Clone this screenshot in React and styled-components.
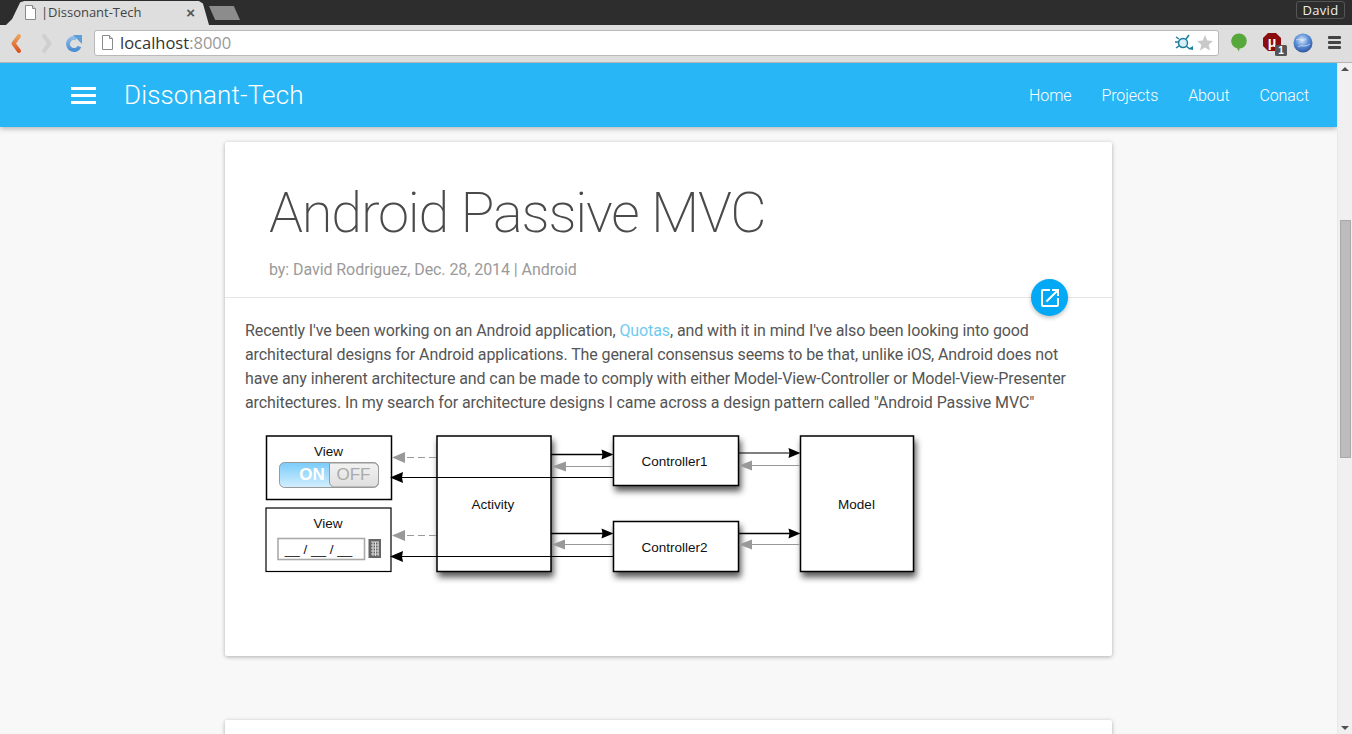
import React from "react"
import styled, { createGlobalStyle } from "styled-components"

const GlobalStyle = createGlobalStyle`
    html, body {
        margin: 0;
        height: 100%;
        overflow: hidden;
    }
    #root {
        height: 100%;
    }
    * {
        box-sizing: border-box;
    }
`

const navLinks = ["Home", "Projects", "About", "Conact"]

const PageIcon = () => (
    <svg width="13" height="15" viewBox="0 0 13 15">
        <path d="M1.5 .5H8.5L11.5 3.5V14.5H1.5Z" fill="#fff" stroke="#8a8a8a" />
        <path d="M8.5 .5V3.5H11.5" fill="#e0e0e0" stroke="#8a8a8a" />
    </svg>
)

const Diagram = () => (
    <svg width="680" height="165" viewBox="255 425 680 165">
        <defs>
            <filter id="shade" x="-15%" y="-15%" width="130%" height="135%">
                <feDropShadow dx="2" dy="5" stdDeviation="3" floodColor="#000" floodOpacity="0.65" />
            </filter>
            <linearGradient id="onFill" x1="0" y1="0" x2="0" y2="1">
                <stop offset="0" stopColor="#7accfb" />
                <stop offset="1" stopColor="#d3effd" />
            </linearGradient>
            <linearGradient id="offFill" x1="0" y1="0" x2="0" y2="1">
                <stop offset="0" stopColor="#f2f2f2" />
                <stop offset="1" stopColor="#dfdfdf" />
            </linearGradient>
        </defs>

        <rect x="266.5" y="436" width="125" height="63.5" fill="#fff" stroke="#000" strokeWidth="1.5" />
        <rect x="266" y="508" width="125" height="63.5" fill="#fff" stroke="#000" strokeWidth="1.2" />

        <g fill="#fff" stroke="#000" strokeWidth="1.5" filter="url(#shade)">
            <rect x="437" y="436" width="114" height="135.5" />
            <rect x="613.5" y="436" width="125" height="49.5" />
            <rect x="613.5" y="521.5" width="125" height="50" />
            <rect x="800.5" y="436" width="113" height="135.5" />
        </g>

        <g stroke="#000" strokeWidth="1.2">
            <path d="M551 454.5H604" strokeWidth="1.6" />
            <path d="M613 477.5H400" />
            <path d="M739 453H791" />
            <path d="M551 533.5H604" strokeWidth="1.4" />
            <path d="M613 556.5H400" />
            <path d="M739 533.5H791" strokeWidth="1.6" />
        </g>
        <g stroke="#999" strokeWidth="1.2">
            <path d="M613 466.5H562" />
            <path d="M800 465.5H750" />
            <path d="M613 544.5H562" />
            <path d="M800 544.5H750" />
            <path d="M436 457.5H404" strokeDasharray="7 4" />
            <path d="M436 535.5H404" strokeDasharray="7 4" />
        </g>
        <g fill="#000">
            <path d="M613.500 454.500L601.500 449.500L602.500 454.500L601.500 459.500Z" />
            <path d="M390 477.500L403 472L402 477.500L403 483Z" />
            <path d="M800.500 453L788.500 448L789.500 453L788.500 458Z" />
            <path d="M613.500 533.500L601.500 528.500L602.500 533.500L601.500 538.500Z" />
            <path d="M390 556.500L403 551L402 556.500L403 562Z" />
            <path d="M800.500 533.500L788.500 528.500L789.500 533.500L788.500 538.500Z" />
        </g>
        <g fill="#999">
            <path d="M552 466.500L566 461.500V471.500Z" />
            <path d="M739 465.500L752 460.500V470.500Z" />
            <path d="M552 544.500L565 539.500V549.500Z" />
            <path d="M739 544.500L752 539.500V549.500Z" />
            <path d="M392 457.500L405 452V463Z" />
            <path d="M392 535.500L405 530V541Z" />
        </g>

        <rect x="279.5" y="462.5" width="99" height="25" rx="5" fill="url(#onFill)" stroke="#999" />
        <path d="M329.5 463H373.5A5 5 0 0 1 378.5 468V482A5 5 0 0 1 373.5 487H334.5A5 5 0 0 1 329.5 482Z" fill="url(#offFill)" stroke="#999" />
        <rect x="278" y="538.500" width="86.500" height="21" fill="#fff" stroke="#aaa" strokeWidth="1.600" />
        <rect x="368.5" y="539" width="12.5" height="19" fill="#666" />
        <path d="M371 542H379M371 545H379M371 548H379M371 551H379M371 554H379M373 542V556M375.5 542V556M378 542V556" stroke="#ddd" strokeWidth="1" />

        <g fontFamily="'Liberation Sans', Arial, sans-serif" fontSize="13.5" fill="#111" textAnchor="middle">
            <text x="328.5" y="456">View</text>
            <text x="328" y="528">View</text>
            <text x="493" y="509">Activity</text>
            <text x="674.500" y="466">Controller1</text>
            <text x="674.500" y="552">Controller2</text>
            <text x="856.5" y="509">Model</text>
            <text x="318.500" y="554">__ / __ / __</text>
            <text x="312" y="480" fontSize="17" fontWeight="700" fill="#fff">ON</text>
            <text x="353.5" y="480" fontSize="17" fontWeight="400" fill="#aaa">OFF</text>
        </g>
    </svg>
)

const App = () => (
    <Window>
        <GlobalStyle />
        <TabStrip>
            <Tab>
                <PageIcon />
                <TabTitle>|Dissonant-Tech</TabTitle>
                <TabClose>×</TabClose>
            </Tab>
            <NewTab />
            <UserBadge>David</UserBadge>
        </TabStrip>
        <Toolbar>
            <NavButtons>
                <svg width="74" height="26" viewBox="0 0 74 26">
                    <defs>
                        <linearGradient id="backFill" x1="0" y1="0" x2="0" y2="1">
                            <stop offset="0" stopColor="#eaa35f" />
                            <stop offset="1" stopColor="#d9551f" />
                        </linearGradient>
                        <linearGradient id="reloadFill" x1="0" y1="0" x2="0" y2="1">
                            <stop offset="0" stopColor="#8db9e6" />
                            <stop offset="1" stopColor="#4d8fd0" />
                        </linearGradient>
                    </defs>
                    <path d="M11 6L5.500 13.500L11 21" fill="none" stroke="url(#backFill)" strokeWidth="4" strokeLinejoin="round" strokeLinecap="round" />
                    <path d="M36 6L41.500 13.500L36 21" fill="none" stroke="#cfcfcf" strokeWidth="4" strokeLinejoin="round" strokeLinecap="round" />
                    <path d="M71.500 16.500A6 6 0 1 1 68 8.300" fill="none" stroke="url(#reloadFill)" strokeWidth="4" />
                    <path d="M65 5H74V14Z" fill="#5f9fd8" />
                </svg>
            </NavButtons>
            <UrlBox>
                <PageIcon />
                <UrlText>localhost<UrlPort>:8000</UrlPort></UrlText>
                <UrlIcons>
                    <svg width="20" height="18" viewBox="0 0 20 18">
                        <circle cx="9" cy="9" r="4.500" fill="#d9eef5" stroke="#1b7d9c" strokeWidth="1.500" />
                        <path d="M5 5L2 3M12 5L15 1M12 12L16 15M5 12L2 14M1 8H4" stroke="#1b7d9c" strokeWidth="1.500" />
                        <path d="M14 15L19 12V16Z" fill="#1b7d9c" />
                    </svg>
                    <svg width="18" height="18" viewBox="0 0 18 18">
                        <path d="M9 1L11.300 6.500L17 7L12.700 10.800L14 16.500L9 13.500L4 16.500L5.300 10.800L1 7L6.700 6.500Z" fill="#c9c9c9" />
                    </svg>
                </UrlIcons>
            </UrlBox>
            <Extensions>
                <svg width="16" height="19" viewBox="0 0 16 19">
                    <path d="M8 .5A7.500 7.500 0 0 1 8.500 15.500L8 18.500L6 15.300A7.500 7.500 0 0 1 8 .5Z" fill="#57a83a" />
                </svg>
                <BlockerIcon>
                    <svg width="26" height="24" viewBox="0 0 26 24">
                        <path d="M6 1H14L19 6V14L14 19H6L1 14V6Z" fill="#8b0d0d" />
                        <text x="10" y="15" fontFamily="'Liberation Sans', sans-serif" fontSize="14" fontWeight="700" fill="#fff" textAnchor="middle">μ</text>
                        <rect x="13" y="13" width="12" height="11" rx="1.500" fill="#555" />
                        <text x="19" y="22" fontFamily="'Liberation Sans', sans-serif" fontSize="10" fontWeight="700" fill="#fff" textAnchor="middle">1</text>
                    </svg>
                </BlockerIcon>
                <svg width="20" height="20" viewBox="0 0 20 20">
                    <defs>
                        <radialGradient id="globe" cx="0.45" cy="0.35" r="0.7">
                            <stop offset="0" stopColor="#dbe9f9" />
                            <stop offset="0.5" stopColor="#5b8fd8" />
                            <stop offset="1" stopColor="#2a4f95" />
                        </radialGradient>
                    </defs>
                    <circle cx="10" cy="10" r="9.500" fill="url(#globe)" />
                    <path d="M3 7C7 5 9 9 13 6M5 14C8 11 12 15 17 11" stroke="#e6eef8" strokeWidth="1" fill="none" opacity="0.7" />
                </svg>
                <MenuIcon>
                    <i /><i /><i />
                </MenuIcon>
            </Extensions>
        </Toolbar>
        <Viewport>
            <Page>
                <AppBar>
                    <BarLeft>
                        <Hamburger><i /><i /><i /></Hamburger>
                        <Brand>Dissonant-Tech</Brand>
                    </BarLeft>
                    <Nav>
                        {navLinks.map((link) => <NavLink key={link}>{link}</NavLink>)}
                    </Nav>
                </AppBar>
                <Feed>
                    <Card>
                        <CardHead>
                            <Title>Android Passive MVC</Title>
                            <Meta>by: David Rodriguez, Dec. 28, 2014 | Android</Meta>
                            <Fab>
                                <svg width="24" height="24" viewBox="0 0 24 24" fill="#fff">
                                    <path d="M19 19H5V5h7V3H5a2 2 0 0 0-2 2v14a2 2 0 0 0 2 2h14a2 2 0 0 0 2-2v-7h-2v7zM14 3v2h3.590l-9.830 9.830 1.410 1.410L19 6.410V10h2V3h-7z" />
                                </svg>
                            </Fab>
                        </CardHead>
                        <CardBody>
                            <Paragraph>
                                Recently I've been working on an Android application, <QuoteLink>Quotas</QuoteLink>, and with it in mind I've also been looking into good architectural designs for Android applications. The general consensus seems to be that, unlike iOS, Android does not have any inherent architecture and can be made to comply with either Model-View-Controller or Model-View-Presenter architectures. In my search for architecture designs I came across a design pattern called "Android Passive MVC"
                            </Paragraph>
                            <DiagramWrap>
                                <Diagram />
                            </DiagramWrap>
                        </CardBody>
                    </Card>
                    <NextCard />
                </Feed>
            </Page>
            <Scrollbar>
                <ScrollArrow $up />
                <ScrollThumb />
                <ScrollArrow />
            </Scrollbar>
        </Viewport>
    </Window>
)

const Window = styled.div`
    height: 734px;
    display: flex;
    flex-direction: column;
    overflow: hidden;
    background-color: #f8f8f8;
`
const TabStrip = styled.div`
    height: 25px;
    flex: none;
    display: flex;
    align-items: flex-end;
    padding-left: 6px;
    background-color: #2d2d2d;
`
const Tab = styled.div`
    width: 203px;
    height: 24px;
    display: flex;
    align-items: center;
    padding: 0 14px 2px 18px;
    background-color: #dedede;
    clip-path: polygon(0 100%, 3% 75%, 7% 5%, 9% 0, 95% 0, 97% 10%, 100% 100%);
`
const TabTitle = styled.span`
    margin-left: 4px;
    flex: 1;
    font: 13px "Open Sans", sans-serif;
    letter-spacing: -0.02px;
    color: #444;
`
const TabClose = styled.span`
    font: 700 15px "Liberation Sans", sans-serif;
    color: #555;
`
const NewTab = styled.div`
    width: 31px;
    height: 14px;
    margin: 0 0 5px 0;
    background-color: #8c8c8c;
    clip-path: polygon(0 0, 80% 0, 100% 100%, 20% 100%);
`
const UserBadge = styled.div`
    width: 49px;
    height: 18px;
    margin: 0 7px 6px auto;
    border: 1px solid #555;
    border-radius: 3px;
    text-align: center;
    font: 13px/16px "Open Sans", sans-serif;
    letter-spacing: 0.3px;
    color: #eee;
`
const Toolbar = styled.div`
    height: 38px;
    flex: none;
    display: flex;
    align-items: center;
    padding: 0 10px 2px 8px;
    background-color: #dedede;
    border-bottom: 1px solid #b5b5b5;
`
const NavButtons = styled.div`
    width: 73px;
    height: 26px;
    flex: none;
`
const UrlBox = styled.div`
    width: 1125px;
    height: 26px;
    margin-left: 13px;
    flex: none;
    display: flex;
    align-items: center;
    padding: 0 4px 0 6px;
    background-color: #fff;
    border: 1px solid #b9b9b9;
    border-radius: 3px;
`
const UrlText = styled.span`
    margin-left: 6px;
    flex: 1;
    font: 16.5px "Open Sans", sans-serif;
    color: #333;
`
const UrlPort = styled.span`
    color: #999;
`
const UrlIcons = styled.div`
    display: flex;
    align-items: center;
    gap: 2px;
`
const Extensions = styled.div`
    flex: 1;
    min-width: 0;
    display: flex;
    align-items: center;
    padding-left: 12px;
    gap: 15px;
`
const BlockerIcon = styled.div`
    width: 16px;
    height: 24px;
    margin-top: 3px;
`
const MenuIcon = styled.div`
    width: 13px;
    display: flex;
    flex-direction: column;
    gap: 2px;
    i {
        display: block;
        height: 3px;
        border-radius: 1px;
        background-color: #444;
    }
`
const Viewport = styled.div`
    flex: 1;
    min-height: 0;
    display: flex;
`
const Page = styled.div`
    flex: 1;
    min-width: 0;
    display: flex;
    flex-direction: column;
    overflow: hidden;
`
const AppBar = styled.header`
    height: 64px;
    flex: none;
    display: flex;
    align-items: center;
    justify-content: space-between;
    padding: 0 28px 0 71px;
    background-color: #29b6f6;
    box-shadow: 0 2px 5px rgba(0, 0, 0, 0.26);
    color: #fff;
    position: relative;
`
const BarLeft = styled.div`
    display: flex;
    align-items: center;
    gap: 28px;
`
const Hamburger = styled.div`
    width: 25px;
    display: flex;
    flex-direction: column;
    gap: 4px;
    i {
        display: block;
        height: 3px;
        background-color: #fff;
    }
`
const Brand = styled.div`
    font: 300 26px Roboto, sans-serif;
    letter-spacing: 0.15px;
`
const Nav = styled.nav`
    display: flex;
    gap: 30px;
`
const NavLink = styled.a`
    font: 300 16px Roboto, sans-serif;
    letter-spacing: -0.1px;
    color: #fff;
`
const Feed = styled.main`
    display: flex;
    flex-direction: column;
    align-items: center;
    gap: 64px;
    padding-top: 15px;
`
const Card = styled.article`
    width: 887px;
    height: 514px;
    flex: none;
    background-color: #fff;
    border-radius: 2px;
    box-shadow: 0 1px 4px rgba(0, 0, 0, 0.3);
`
const NextCard = styled(Card)``
const CardHead = styled.div`
    height: 156px;
    padding: 36px 44px 0;
    border-bottom: 1px solid #e6e6e6;
    position: relative;
`
const Title = styled.h1`
    margin: 0;
    font: 200 56px/70px Roboto, sans-serif;
    letter-spacing: -1.2px;
    color: #4a4a4a;
`
const Meta = styled.div`
    margin-top: 10px;
    font: 400 16px/24px Roboto, sans-serif;
    letter-spacing: -0.07px;
    color: #9a9a9a;
`
const Fab = styled.div`
    position: absolute;
    right: 44px;
    bottom: -19px;
    width: 37px;
    height: 37px;
    display: flex;
    align-items: center;
    justify-content: center;
    border-radius: 50%;
    background-color: #03a9f4;
    box-shadow: 0 2px 4px rgba(0, 0, 0, 0.25);
`
const CardBody = styled.div`
    padding: 21px 20px 0;
`
const Paragraph = styled.p`
    margin: 0;
    font: 400 16px/24px Roboto, sans-serif;
    letter-spacing: -0.1px;
    color: #555;
`
const QuoteLink = styled.a`
    color: #6fcbee;
`
const DiagramWrap = styled.div`
    display: flex;
    margin: 10px 0 0 10px;
`
const Scrollbar = styled.div`
    width: 15px;
    flex: none;
    display: flex;
    flex-direction: column;
    align-items: center;
    justify-content: space-between;
    background-color: #f0f0f0;
    border-left: 1px solid #e8e8e8;
    position: relative;
`
const ScrollArrow = styled.div`
    width: 0;
    height: 0;
    margin: 4px 0;
    border-left: 4px solid transparent;
    border-right: 4px solid transparent;
    ${(props) => props.$up ? "border-bottom: 4px solid #505050;" : "border-top: 4px solid #505050;"}
`
const ScrollThumb = styled.div`
    position: absolute;
    top: 157px;
    left: 2px;
    width: 11px;
    height: 238px;
    background-color: #bcbcbc;
    border: 1px solid #a9a9a9;
`

export default App
